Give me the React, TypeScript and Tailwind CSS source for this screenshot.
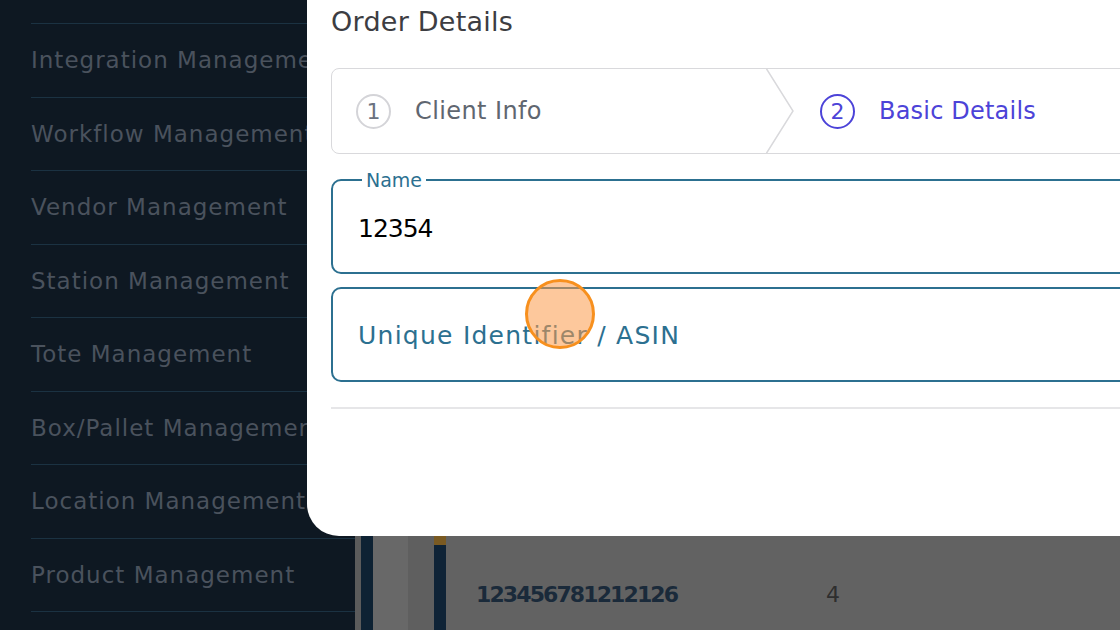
const menu = [
  "Integration Management",
  "Workflow Management",
  "Vendor Management",
  "Station Management",
  "Tote Management",
  "Box/Pallet Management",
  "Location Management",
  "Product Management",
];

function Sidebar() {
  return (
    <aside className="w-[355px] shrink-0 h-full bg-[#0e1822] pl-[31px] pt-[23px] overflow-hidden">
      {menu.map((item) => (
        <div
          key={item}
          className="h-[73.5px] border-t-[1.5px] border-[#1b3242] flex items-center whitespace-nowrap text-[23px] tracking-[1px] text-[#4a525d]"
        >
          {item}
        </div>
      ))}
      <div className="h-[30px] border-t-[1.5px] border-[#1b3242]" />
    </aside>
  );
}

function Stepper() {
  return (
    <div className="flex h-[86px] border-[1.5px] border-[#d9d9dc] rounded-[8px] overflow-hidden">
      <div className="w-[434px] shrink-0 flex items-center pl-[24px] gap-[24px]">
        <div className="w-[35px] h-[35px] rounded-full border-[2.5px] border-[#d4d4d8] flex items-center justify-center text-[22px] text-[#6b7280]">
          1
        </div>
        <span className="text-[24px] tracking-[0.4px] text-[#5f6670]">Client Info</span>
      </div>
      <svg width="28" height="86" viewBox="0 0 28 86" className="shrink-0 -my-[1.5px]">
        <path d="M0 0 L27 43 L0 86" fill="none" stroke="#d9d9dc" strokeWidth="1.5" />
      </svg>
      <div className="flex items-center pl-[26px] gap-[24px]">
        <div className="w-[35px] h-[35px] rounded-full border-[2.5px] border-[#4c43d8] flex items-center justify-center text-[22px] text-[#4c43d8]">
          2
        </div>
        <span className="text-[24px] tracking-[0.2px] text-[#4c43d8] whitespace-nowrap">Basic Details</span>
      </div>
    </div>
  );
}

function OrderModal() {
  return (
    <div className="absolute left-[307px] top-0 w-[900px] h-[536px] bg-white rounded-bl-[32px] pl-[24px] pt-[6px]">
      <h2 className="text-[27px] leading-[32px] font-medium tracking-[0.25px] text-[#3d3d42]">Order Details</h2>
      <div className="mt-[30px]">
        <Stepper />
      </div>
      <fieldset className="mt-[15px] h-[105px] border-2 border-[#2c7090] rounded-[10px] pl-[25px]">
        <legend className="ml-[4px] px-[4px] text-[19px] leading-[22px] text-[#2c7090]">Name</legend>
        <div className="h-[76px] flex items-center text-[25px] tracking-[-1px] text-black">12354</div>
      </fieldset>
      <div className="mt-[13px] h-[95px] border-2 border-[#2c7090] rounded-[10px] pl-[25px] pt-[3px] flex items-center text-[25px] tracking-[1.25px] text-[#2c7090]">
        Unique Identifier / ASIN
      </div>
      <div className="mt-[25px] h-[2px] bg-[#e6e6e8]" />
    </div>
  );
}

function Backdrop() {
  return (
    <main className="flex-1 h-full bg-[#626262] flex">
      <div className="w-[6px] bg-[#5b5b5b]" />
      <div className="w-[12px] bg-[#0e2233]" />
      <div className="w-[35px] bg-[#686868]" />
      <div className="w-[26px] bg-[#5f5f5f]" />
      <div className="w-[12px] bg-[#0f2336] flex flex-col">
        <div className="h-[545px] bg-[#7a5a22]" />
      </div>
      <div className="flex-1 flex flex-col">
        <div className="h-[536px]" />
        <div className="flex-1 flex items-center pl-[30px] pt-[22px]">
          <span className="w-[350px] text-[22px] tracking-[-1.9px] font-bold text-[#1a2a3a]">123456781212126</span>
          <span className="text-[22px] text-[#2e2e2e]">4</span>
        </div>
      </div>
    </main>
  );
}

export default function App() {
  return (
    <div
      className="relative w-[1120px] h-[630px] overflow-hidden flex"
      style={{ fontFamily: '"DejaVu Sans", sans-serif' }}
    >
      <Sidebar />
      <Backdrop />
      <OrderModal />
      <div className="absolute left-[525px] top-[279px] w-[70px] h-[70px] rounded-full border-[3px] border-[#f7901e] bg-[#fb9a4a]/55" />
    </div>
  );
}
